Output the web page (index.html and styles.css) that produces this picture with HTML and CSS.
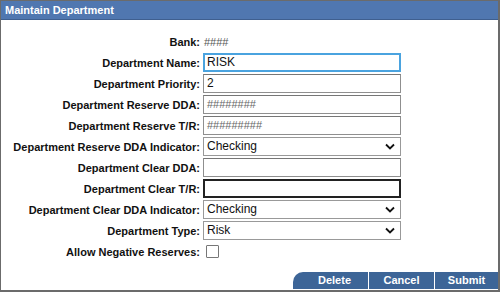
FILE: index.html
```html
<!DOCTYPE html>
<html>
<head>
<meta charset="utf-8">
<link rel="stylesheet" href="styles.css">
</head>
<body>
<div class="panel">
  <div class="header">Maintain Department</div>
  <div class="form">
    <div class="label">Bank:</div>
    <div class="value"><span class="static">####</span></div>

    <div class="label">Department Name:</div>
    <div class="value"><div class="field focus">RISK</div></div>

    <div class="label">Department Priority:</div>
    <div class="value"><div class="field">2</div></div>

    <div class="label">Department Reserve DDA:</div>
    <div class="value"><div class="field mask">########</div></div>

    <div class="label">Department Reserve T/R:</div>
    <div class="value"><div class="field mask">#########</div></div>

    <div class="label">Department Reserve DDA Indicator:</div>
    <div class="value"><div class="field select"><span>Checking</span><svg class="chev" width="10" height="7" viewBox="0 0 10 7"><path d="M1 1.5 L5 5.5 L9 1.5" fill="none" stroke="#111" stroke-width="1.8"/></svg></div></div>

    <div class="label">Department Clear DDA:</div>
    <div class="value"><div class="field"></div></div>

    <div class="label">Department Clear T/R:</div>
    <div class="value"><div class="field dark"></div></div>

    <div class="label">Department Clear DDA Indicator:</div>
    <div class="value"><div class="field select"><span>Checking</span><svg class="chev" width="10" height="7" viewBox="0 0 10 7"><path d="M1 1.5 L5 5.5 L9 1.5" fill="none" stroke="#111" stroke-width="1.8"/></svg></div></div>

    <div class="label">Department Type:</div>
    <div class="value"><div class="field select"><span>Risk</span><svg class="chev" width="10" height="7" viewBox="0 0 10 7"><path d="M1 1.5 L5 5.5 L9 1.5" fill="none" stroke="#111" stroke-width="1.8"/></svg></div></div>

    <div class="label">Allow Negative Reserves:</div>
    <div class="value"><div class="check"></div></div>
  </div>
  <div class="spacer"></div>
  <div class="buttons">
    <div class="btn first">Delete</div>
    <div class="btn">Cancel</div>
    <div class="btn last">Submit</div>
  </div>
</div>
</body>
</html>
```
FILE: styles.css
```css
* { box-sizing: border-box; }
html, body { margin: 0; padding: 0; background: #fff; }
body { font-family: "Liberation Sans", Arial, sans-serif; }
.panel {
  width: 500px;
  height: 292px;
  border: 1px solid #6b6b6b;
  border-right-width: 2px;
  border-bottom-width: 2px;
  display: flex;
  flex-direction: column;
  background: #fff;
}
.header {
  height: 19px;
  background: #5077b0;
  color: #fff;
  font-weight: bold;
  font-size: 11px;
  line-height: 19px;
  padding-left: 4px;
  border-bottom: 1px solid #3f5f8f;
}
.form {
  display: grid;
  grid-template-columns: 199px 201px;
  grid-auto-rows: 19px;
  row-gap: 2px;
  padding-top: 12px;
  align-items: center;
}
.label {
  text-align: right;
  font-weight: bold;
  font-size: 11px;
  color: #111;
  white-space: nowrap;
}
.value { padding-left: 3px; height: 19px; display: flex; align-items: center; }
.static { font-size: 11px; color: #555; padding-left: 1px; }
.field {
  width: 200px;
  height: 19px;
  border: 1px solid #8f8f8f;
  border-top-color: #767676;
  font-size: 12px;
  line-height: 17px;
  padding-left: 3px;
  color: #111;
  display: flex;
  align-items: center;
}
.field.focus { border: 2px solid #4aa3df; padding-left: 2px; }
.field.dark { border: 2px solid #222; }
.field.mask { color: #666; font-size: 11px; }
.field.select { justify-content: space-between; padding-right: 5px; border-color: #999; }
.chev { display: block; }
.check {
  width: 13px;
  height: 13px;
  border: 1px solid #777;
  margin-left: 3px;
  border-radius: 1px;
}
.spacer { flex: 1; }
.buttons {
  display: flex;
  justify-content: flex-end;
  gap: 1px;
  height: 17px;
  margin-bottom: 1px;
}
.btn {
  background: #3d6597;
  color: #fff;
  font-weight: bold;
  font-size: 11px;
  line-height: 17px;
  text-align: center;
  width: 65px;
}
.btn.first { width: 75px; border-top-left-radius: 10px; padding-left: 8px; }
.btn.last { width: 63px; }
```
